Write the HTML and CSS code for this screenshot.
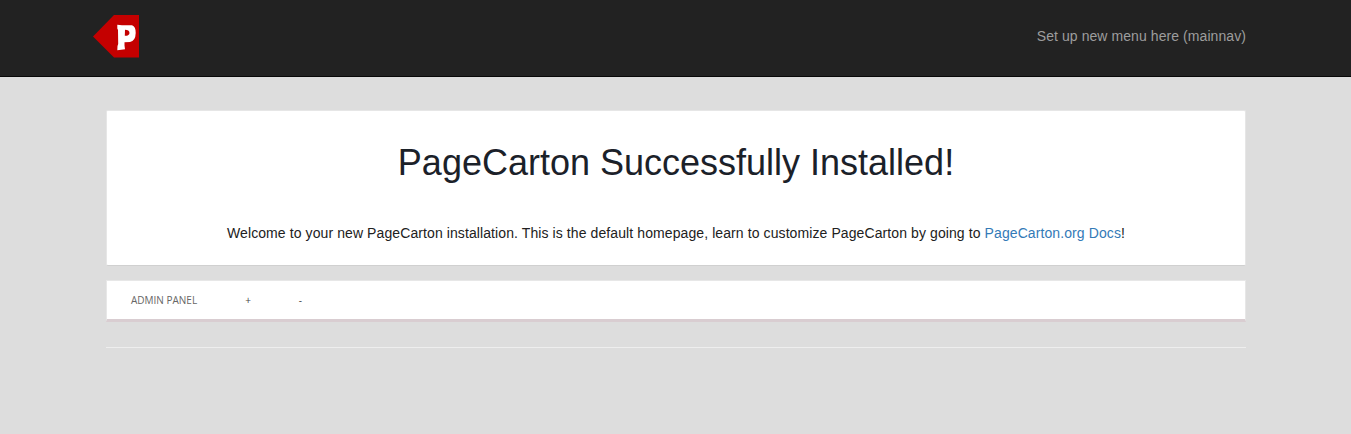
FILE: index.html
```html
<!DOCTYPE html>
<html lang="en">
<head>
<meta charset="utf-8">
<title>PageCarton</title>
<link rel="stylesheet" href="styles.css">
</head>
<body>
<header class="navbar">
  <a class="brand" href="#" aria-label="PageCarton"><svg width="46" height="43" viewBox="0 0 46 43"><path d="M0 21.500 21 0H46V42.500H21Z" fill="#c40000"/><path d="M24.300 9.700 29 10.300 39 10.300Q42.800 11.500 42.700 18 42.500 26 37 27L31.500 27.200 31.500 30.500 32 34.300 24.300 35.200 24.500 31 25.200 29 25 15 24.300 13.500ZM32 14.800 31.800 20.800Q36.300 21 36.500 18 36.300 14.800 32 14.800Z" fill="#fff" fill-rule="evenodd"/></svg></a>
  <a class="menu" href="#">Set up new menu here (mainnav)</a>
</header>
<main class="content">
  <section class="welcome">
    <h1 class="title">PageCarton Successfully Installed!</h1>
    <p class="intro">Welcome to your new PageCarton installation. This is the default homepage, learn to customize PageCarton by going to <a class="link" href="#">PageCarton.org Docs</a>!</p>
  </section>
  <nav class="admin"><a>ADMIN PANEL</a><a class="symbol">+</a><a class="symbol">-</a></nav>
  <hr class="rule">
</main>
</body>
</html>
```
FILE: styles.css
```css
* { box-sizing: border-box; }
body { margin: 0; min-height: 434px; background: #ddd; color: #212121; font: 14px/20px "Liberation Sans", Arial, sans-serif; }
a { text-decoration: none; }
.navbar { height: 77px; padding: 15px 105px 0 93px; display: flex; justify-content: space-between; background: #222; border-bottom: 1px solid #080808; }
.brand { height: 43px; }
.brand svg { display: block; }
.menu { margin-top: 11px; color: #9d9d9d; letter-spacing: 0.075px; }
.content { margin: 33px 105px 0 106px; }
.welcome { height: 156px; padding: 32px 0 0; text-align: center; background: #fff; border: 1px solid #e6e6e6; border-bottom-color: #d0d0d0; border-radius: 2px; }
.title { margin: 0; color: #1b2129; font-size: 36px; line-height: 40px; font-weight: 400; }
.intro { margin: 40px 0 0; letter-spacing: 0.094px; }
.link { color: #337ab7; }
.admin { height: 42px; margin-top: 14px; padding: 0 24px; display: flex; gap: 48px; background: #fff; border: 1px solid #e7e7e7; border-bottom: 3px solid #d9cdd1; color: #666; font: 10px/38px "Open Sans", sans-serif; }
.symbol { color: #444; }
.rule { margin: 25px 0 0; border: 0; border-top: 1px solid #eee; }
```
